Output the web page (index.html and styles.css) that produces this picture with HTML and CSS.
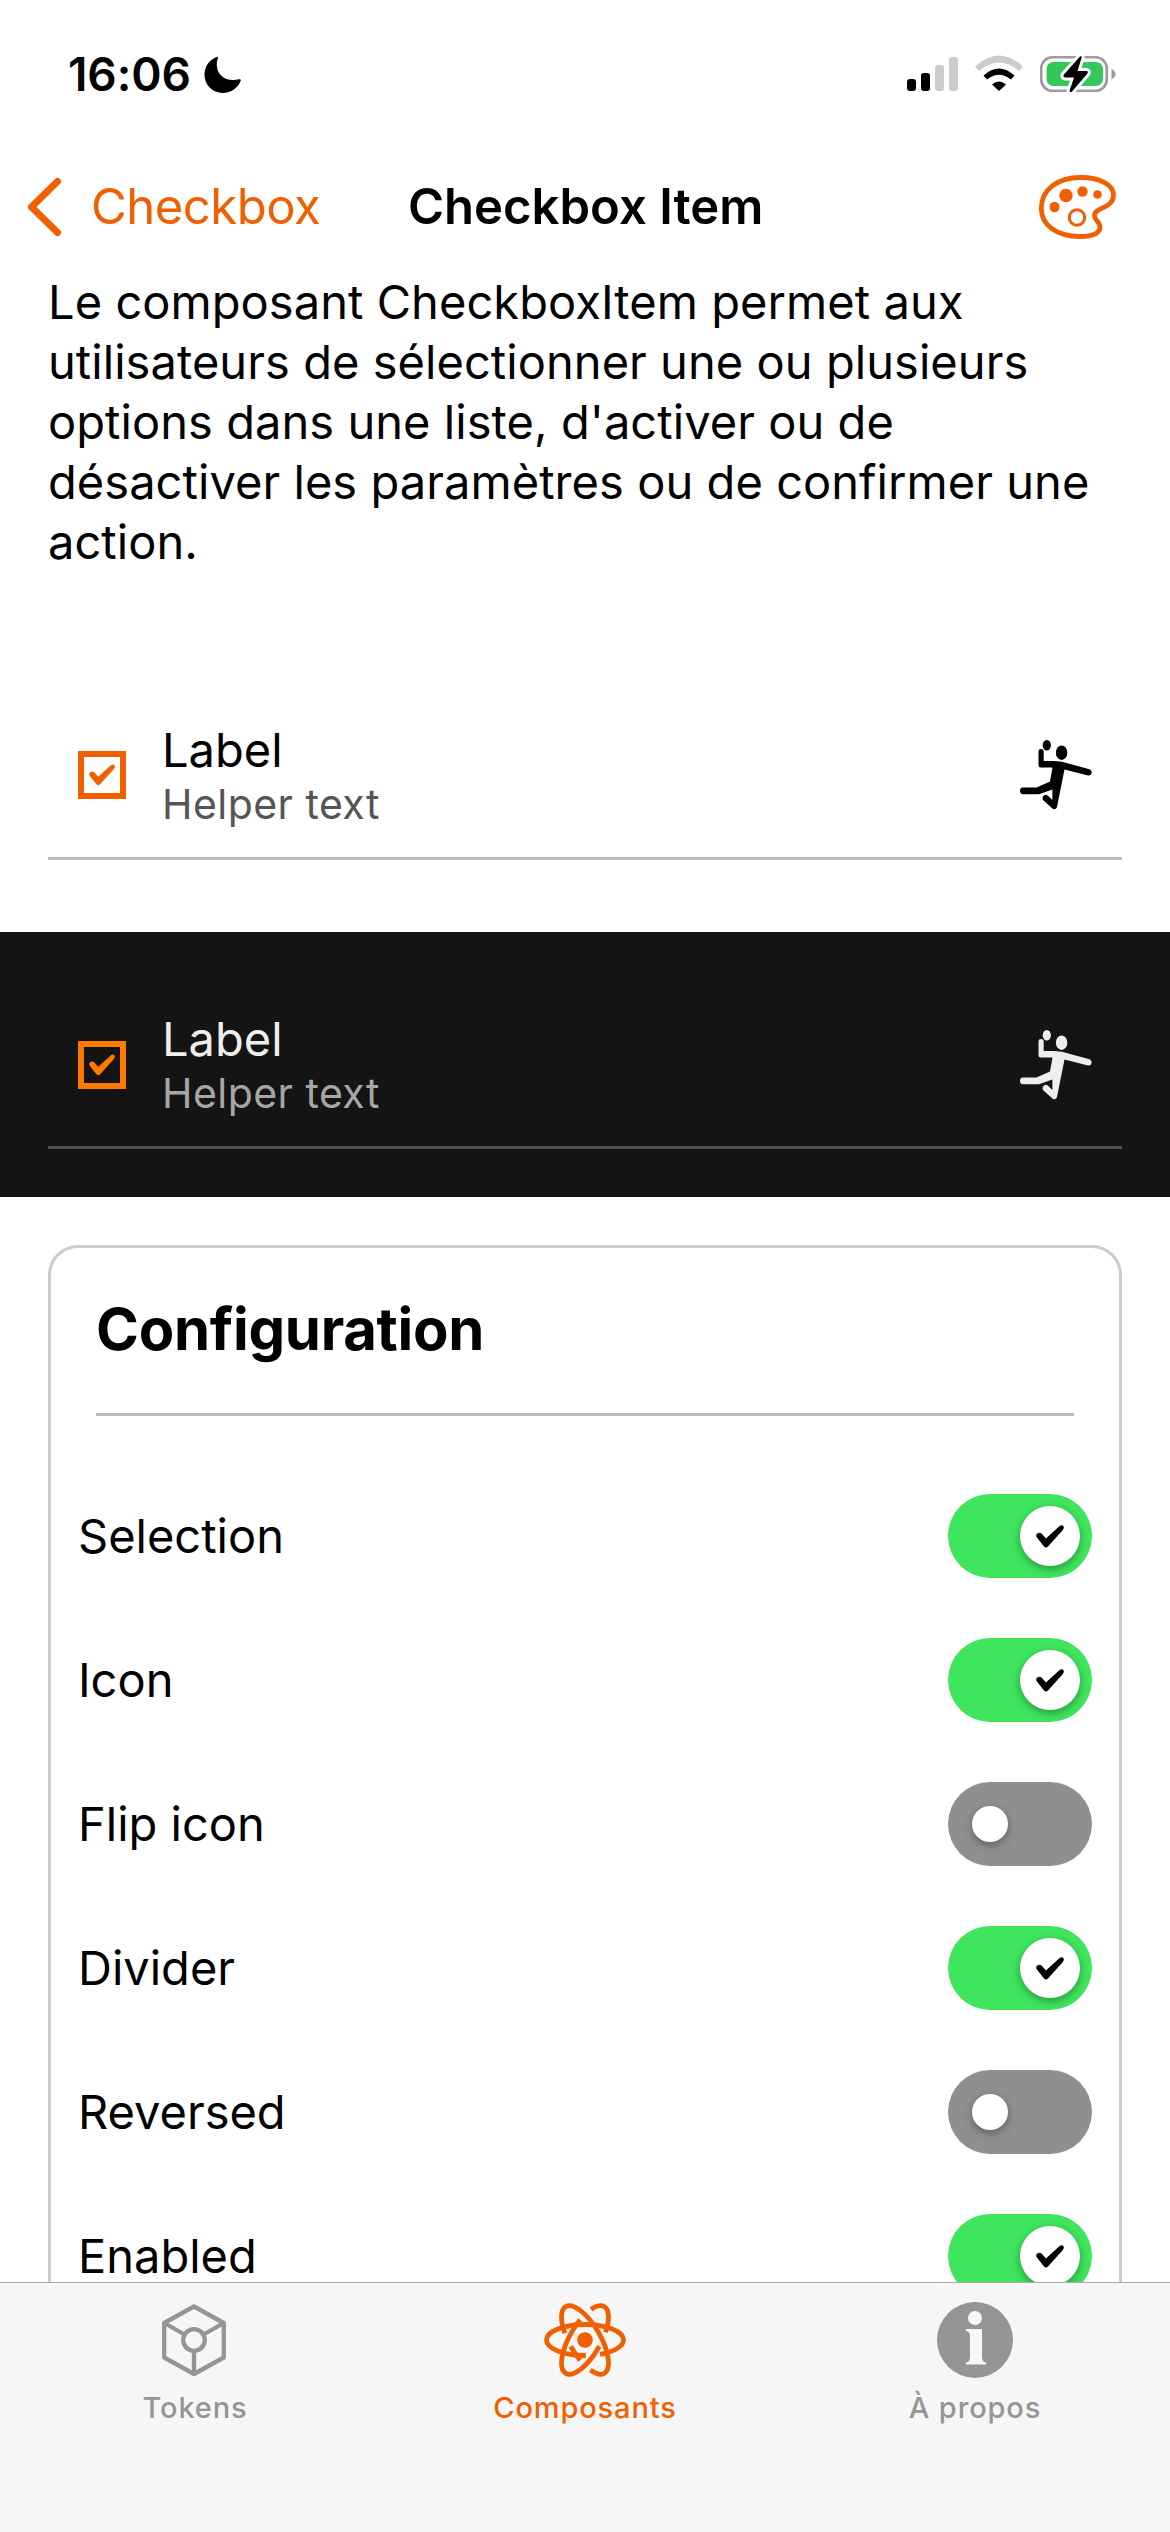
FILE: index.html
```html
<!DOCTYPE html>
<html lang="fr">
<head>
<meta charset="utf-8">
<title>Checkbox Item</title>
<link rel="stylesheet" href="styles.css">
</head>
<body>
<svg width="0" height="0" class="defs">
  <symbol id="tick" viewBox="0 0 28 23"><path d="M1.2 8.6Q3.6 6.6 5.8 8.8L9.9 13.4 23.6 1Q26 -.6 27.6 1.4Q28.4 3.2 26.6 5.2L12 21.4Q10 23.6 8 21.4L.9 12.6Q-.6 10.4 1.2 8.6Z" fill="currentColor"/></symbol>
  <symbol id="handball" viewBox="0 0 72 72">
    <ellipse cx="26.8" cy="6.3" rx="4.1" ry="5.3" fill="currentColor"/>
    <ellipse cx="41.6" cy="13.7" rx="5.7" ry="7.3" fill="currentColor"/>
    <path d="M18.5 12.5C18.5 10.8 19.600 10 21 10S23.700 10.800 23.700 12.500V22H33Q37 22 42 22.800L69.500 30.300Q72 31.300 71.700 33.800Q71 37 68 36.500L44.500 30.500L37 68Q36 71 33 70L23.500 61.500Q21.500 59 23.500 57Q25.500 55 27.700 56.500L32.400 61V50.500L19 55.300H3Q0 55 0 52Q0 48.600 3 48.600H16.500L30 42.500L32.500 28.500H20.500Q18.500 28.500 18.500 26Z" fill="currentColor"/>
  </symbol>
</svg>
<div class="screen">
  <header class="status">
    <span class="time">16:06</span>
    <svg class="moon" width="38" height="38" viewBox="0 0 38 38"><path d="M14 .8C7 3.300 1.500 10 1.500 18.500A18 18 0 0 0 19.500 37C28 37 35.500 31.500 37.800 24.500C38 23.400 37 23 36 23.300C24 26.500 13 20 13.800 7C13.900 5 14.500 3.500 15 2.200Q15 .6 14 .8Z"/></svg>
    <svg class="signal" width="212" height="40" viewBox="0 0 212 40">
      <rect x="0" y="25" width="9" height="12" rx="3"/><rect x="14" y="19" width="9" height="18" rx="3"/>
      <g fill="#ccc"><rect x="28" y="11" width="9" height="26" rx="3"/><rect x="42" y="3" width="9" height="34" rx="3"/></g>
      <path d="M68 12.500L72 17Q92 0 112 17L116 12.500Q92 -9.500 68 12.500Z" fill="#ccc"/>
      <path d="M76.500 21.500L80 25.500Q92 16 104 25.500L107.500 21.500Q92 7.500 76.500 21.500ZM85 30.500Q92 24.500 99 30.500L92 37Z"/>
      <rect x="134.300" y="3.300" width="65.400" height="33.400" rx="11" fill="none" stroke="#9c9c9c" stroke-width="2.600"/>
      <rect x="139.500" y="8" width="56.500" height="24" rx="7" fill="#34c759"/>
      <path d="M204.500 15Q208.500 17 208.500 20T204.500 25.500Z" fill="#9c9c9c"/>
      <path d="M173 2.500L156.500 21Q156 23 158 23.500H167L162.500 37Q163 39 165 37.500L180.500 19.500Q181.500 17.500 179.500 17H170.500L174.700 3.500Q174.500 1.500 173 2.500Z" stroke="#fff" stroke-width="6" paint-order="stroke"/>
    </svg>
  </header>
  <nav class="nav">
    <svg width="36" height="60" viewBox="0 0 36 60"><path d="M31.500 4.500L5.500 30L31.500 55.500" fill="none" stroke="currentColor" stroke-width="7" stroke-linecap="round" stroke-linejoin="round"/></svg>
    <span class="back">Checkbox</span>
    <h1 class="title">Checkbox Item</h1>
    <svg class="palette" width="78" height="66" viewBox="0 0 78 66">
      <path d="M43.500 3.500C20 3 3.300 15.500 3.300 34.500C3.300 52 20 62.500 41.500 62.500C55 62.500 62 59 62 53C62 48 56.500 46 56.500 41.500C56.500 33 75.500 35 75.500 21C75.500 10 60 3.500 43.500 3.500Z" fill="none" stroke="currentColor" stroke-width="4.800"/>
      <ellipse cx="16.500" cy="33" rx="5" ry="5.200" fill="currentColor"/><circle cx="28" cy="21.500" r="6.700" fill="currentColor"/><circle cx="44.500" cy="17.500" r="5.200" fill="currentColor"/><circle cx="59.500" cy="20.500" r="4.300" fill="currentColor"/>
      <circle cx="39" cy="43.500" r="7.700" fill="none" stroke="currentColor" stroke-width="3"/>
    </svg>
  </nav>
  <main class="content">
    <p class="intro">Le composant CheckboxItem permet aux<br>utilisateurs de sélectionner une ou plusieurs<br>options dans une liste, d'activer ou de<br>désactiver les paramètres ou de confirmer une<br>action.</p>
    <section class="demo light">
      <div class="item">
        <span class="box"><svg width="26" height="22"><use href="#tick"/></svg></span>
        <div class="texts"><span class="label">Label</span><span class="helper">Helper text</span></div>
        <svg class="player" width="72" height="72"><use href="#handball"/></svg>
      </div>
    </section>
    <section class="demo dark">
      <div class="item">
        <span class="box"><svg width="26" height="22"><use href="#tick"/></svg></span>
        <div class="texts"><span class="label">Label</span><span class="helper">Helper text</span></div>
        <svg class="player" width="72" height="72"><use href="#handball"/></svg>
      </div>
    </section>
    <section class="card">
      <h2 class="heading">Configuration</h2>
      <div class="row"><span>Selection</span><i class="toggle on"><b><svg width="28" height="23"><use href="#tick"/></svg></b></i></div>
      <div class="row"><span>Icon</span><i class="toggle on"><b><svg width="28" height="23"><use href="#tick"/></svg></b></i></div>
      <div class="row"><span>Flip icon</span><i class="toggle"><b></b></i></div>
      <div class="row"><span>Divider</span><i class="toggle on"><b><svg width="28" height="23"><use href="#tick"/></svg></b></i></div>
      <div class="row"><span>Reversed</span><i class="toggle"><b></b></i></div>
      <div class="row"><span>Enabled</span><i class="toggle on"><b><svg width="28" height="23"><use href="#tick"/></svg></b></i></div>
    </section>
  </main>
  <footer class="tabs">
    <div class="tab">
      <svg width="84" height="76" viewBox="0 0 84 76" fill="none" stroke="currentColor" stroke-width="4.300" stroke-linejoin="round"><path d="M41 4.500L70.800 21V55.500L41 72L11.200 55.500V21ZM11.200 21L31.500 32.500M70.800 21L50.500 32.500M41 50V72"/><circle cx="41" cy="38" r="10.800"/></svg>
      <span>Tokens</span>
    </div>
    <div class="tab active">
      <svg width="84" height="76" viewBox="0 0 84 76" fill="none" stroke="currentColor" stroke-width="4.800">
        <ellipse cx="42" cy="38" rx="38.500" ry="15.500" pathLength="100" stroke-dasharray="16.500 8 75.500 0"/>
        <ellipse cx="42" cy="38" rx="38.500" ry="15.500" pathLength="100" stroke-dasharray="8.500 8 9.500 8 66 0" transform="rotate(60 42 38)"/>
        <ellipse cx="42" cy="38" rx="38.500" ry="15.500" pathLength="100" stroke-dasharray="15.500 8.500 59.500 8.500 8 0" transform="rotate(-60 42 38)"/>
        <circle cx="42" cy="38" r="7.800" fill="currentColor" stroke="none"/>
      </svg>
      <span>Composants</span>
    </div>
    <div class="tab">
      <svg width="84" height="76" viewBox="0 0 84 76"><circle cx="42" cy="38" r="38" fill="currentColor"/><g fill="#f7f7f7"><circle cx="42" cy="16" r="7"/><path d="M33 27H49V55Q49 60 53 60.500V62.500H33V60.500Q37 60 37 55V34Q37 29.500 33 29Z"/></g></svg>
      <span>À propos</span>
    </div>
  </footer>
</div>
</body>
</html>
```
FILE: styles.css
```css
* { box-sizing: border-box; margin: 0; padding: 0; }
body { font-family: Inter, "Liberation Sans", sans-serif; background: #fff; color: #000; }
svg { display: block; flex: none; }
.defs { position: absolute; }
.screen { width: 1170px; height: 2532px; display: flex; flex-direction: column; overflow: hidden; }
.status { height: 141px; flex: none; display: flex; align-items: flex-start; padding: 54px 51px 0 68px; }
.time { width: 135px; font-size: 46px; font-weight: 600; line-height: 41px; letter-spacing: -.1px; white-space: nowrap; }
.moon { margin-top: 2px; }
.signal { margin-left: auto; }
.nav { height: 132px; flex: none; display: flex; align-items: center; padding: 0 54px 0 26px; color: #f16000; font-size: 49px; line-height: 60px; white-space: nowrap; }
.back { margin-left: 29px; width: 317px; letter-spacing: -.5px; }
.title { font-size: 49px; font-weight: 600; color: #000; }
.palette { margin-left: auto; }
.content { flex: 1; min-height: 0; overflow: hidden; margin-top: -1px; }
.intro { height: 390px; padding: 0 48px; font-size: 47px; line-height: 60px; letter-spacing: .06px; white-space: nowrap; }
.demo { padding: 0 48px; }
.light { height: 270px; padding-top: 30px; }
.dark { height: 265px; background: #141414; padding-top: 48px; }
.item { height: 168px; border-bottom: 3px solid #bbb; display: flex; align-items: center; padding: 1px 30px 0; }
.dark .item { height: 169px; padding-top: 4px; border-color: #505050; }
.box { width: 48px; height: 48px; border: 6px solid #f16000; color: #f16000; display: flex; align-items: center; justify-content: center; }
.dark .box { border-color: #ff7900; color: #ff7900; }
.texts { margin-left: 36px; padding-bottom: 2px; display: flex; flex-direction: column; }
.dark .texts { padding-bottom: 4px; }
.label { font-size: 47px; line-height: 60px; }
.helper { font-size: 41px; line-height: 48px; letter-spacing: .45px; color: #555; }
.dark .label, .dark .player { color: #eee; }
.dark .helper { color: #a6a6a6; }
.player { margin-left: auto; }
.card { margin: 48px 48px 0; border: 3px solid #ccc; border-radius: 30px; height: 1500px; }
.heading { margin: 0 45px 48px; height: 168px; padding-top: 41px; border-bottom: 3px solid #bbb; font-size: 58px; font-weight: 700; line-height: 80px; letter-spacing: -.28px; }
.row { height: 144px; display: flex; align-items: center; justify-content: space-between; padding: 0 27px; font-size: 47px; line-height: 60px; }
.toggle { width: 144px; height: 84px; border-radius: 42px; background: #8f8f8f; display: flex; align-items: center; padding: 0 24px; }
.toggle b { width: 36px; height: 36px; border-radius: 50%; background: #fff; box-shadow: 0 3px 8px rgba(0,0,0,.35); display: flex; align-items: center; justify-content: center; }
.toggle.on { background: #3ee55d; justify-content: flex-end; padding: 0 12px; }
.toggle.on b { width: 60px; height: 60px; }
.tabs { height: 250px; flex: none; border-top: 1px solid #a9a9a9; background: #f6f6f6; display: flex; padding-top: 19px; }
.tab { width: 390px; display: flex; flex-direction: column; align-items: center; gap: 10px; color: #959595; font-size: 29px; line-height: 40px; font-weight: 500; letter-spacing: .85px; }
.tab.active { color: #f16000; }
```
